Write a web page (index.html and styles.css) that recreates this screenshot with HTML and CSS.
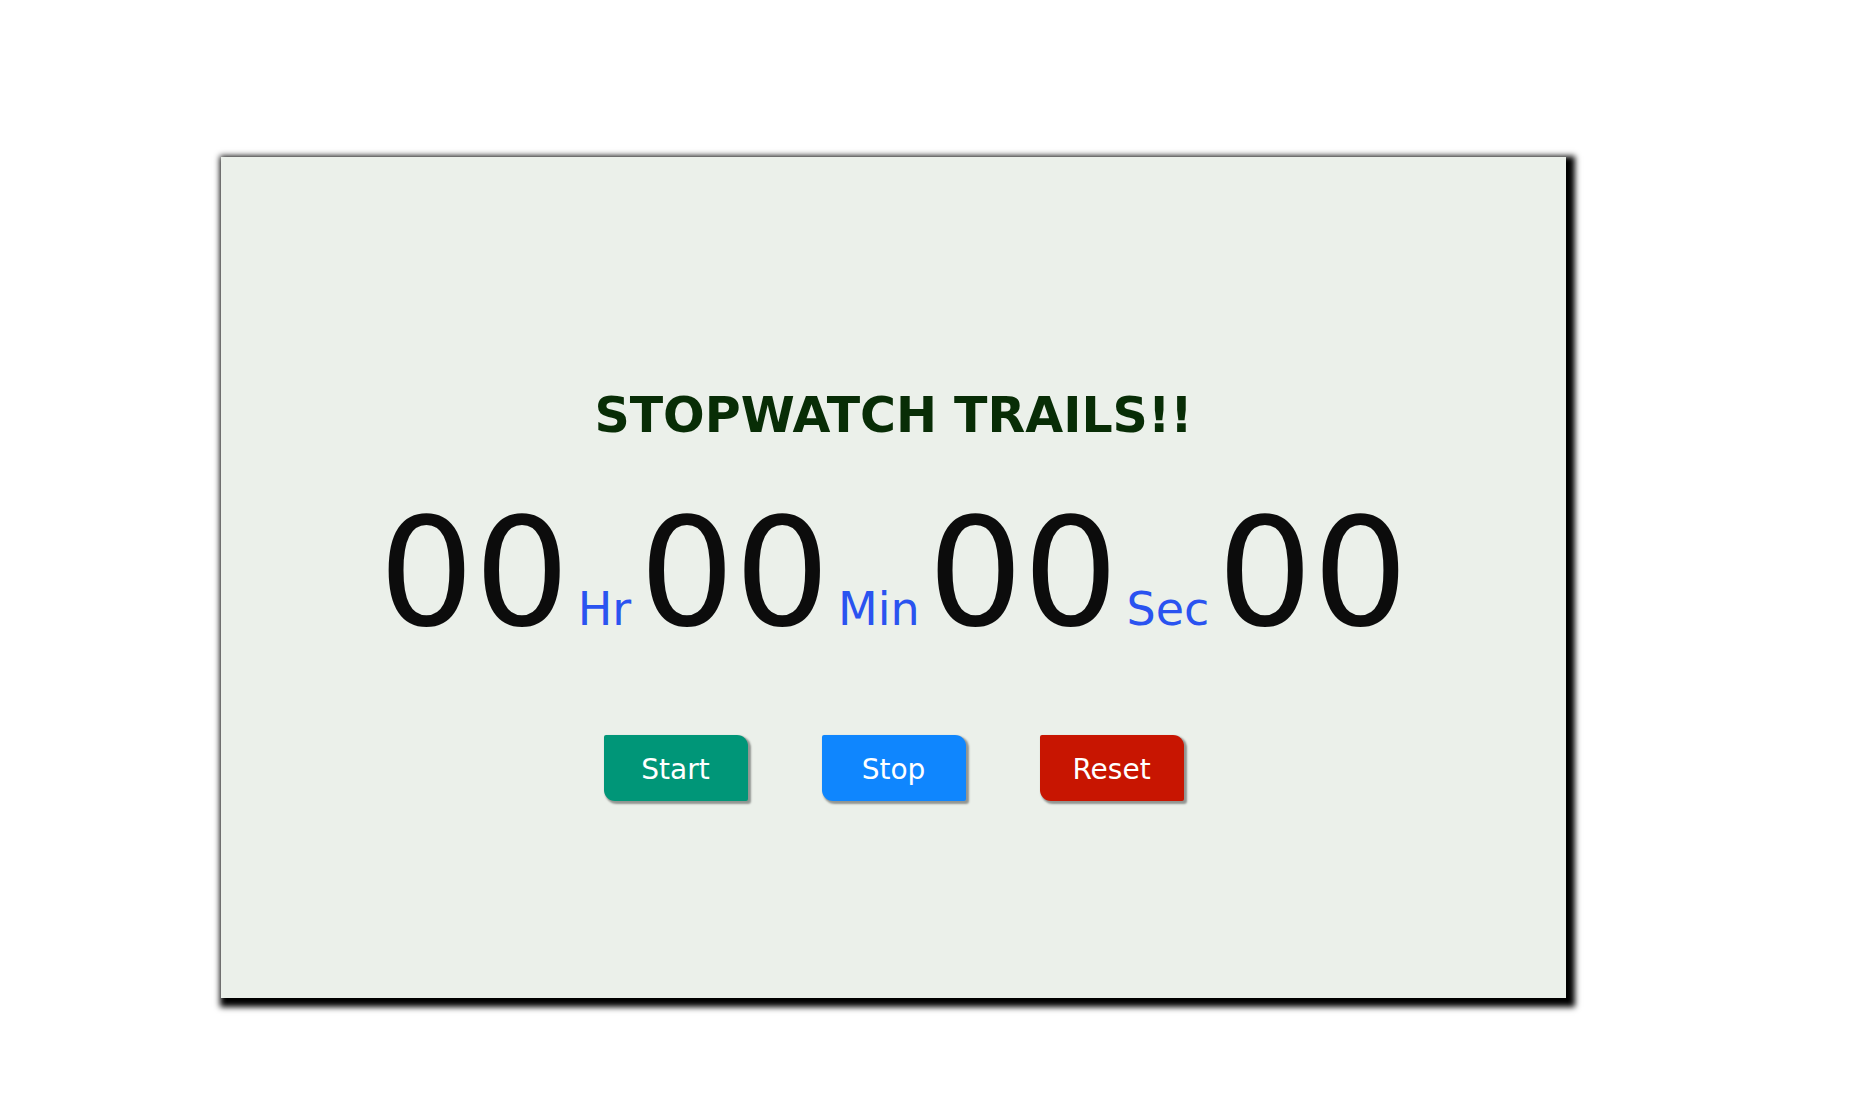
FILE: index.html
```html
<!DOCTYPE html>
<html lang="en">
<head>
<meta charset="utf-8">
<title>Stopwatch</title>
<link rel="stylesheet" href="styles.css">
</head>
<body>
<div class="card">
  <h1 class="title">STOPWATCH TRAILS!!</h1>
  <div class="time">
    <span class="digits">00</span>
    <span class="unit">Hr</span>
    <span class="digits">00</span>
    <span class="unit">Min</span>
    <span class="digits">00</span>
    <span class="unit">Sec</span>
    <span class="digits">00</span>
  </div>
  <div class="buttons">
    <button class="btn btn-start">Start</button>
    <button class="btn btn-stop">Stop</button>
    <button class="btn btn-reset">Reset</button>
  </div>
</div>
</body>
</html>
```
FILE: styles.css
```css
html {
  margin: 0;
  padding: 0;
  background: #ffffff;
}

body {
  box-sizing: border-box;
  margin: 0;
  padding: 157px 0 0 221px;
  min-height: 1101px;
  background: #ffffff;
  font-family: "DejaVu Sans", Verdana, sans-serif;
}

.card {
  box-sizing: border-box;
  width: 1345px;
  height: 841px;
  padding-top: 235px;
  background: #ebf0ea;
  box-shadow: 4px 4px 6px 5px #000;
  display: flex;
  flex-direction: column;
  align-items: center;
}

.title {
  margin: 0 0 58px 0;
  font-size: 49px;
  line-height: 48px;
  font-weight: bold;
  color: #082d06;
}

.time {
  display: flex;
  align-items: baseline;
  justify-content: center;
  gap: 8px;
  height: 150px;
  margin-bottom: 87px;
}

.digits {
  font-size: 150px;
  line-height: 150px;
  color: #0c0c0c;
}

.unit {
  font-size: 46px;
  line-height: 46px;
  color: #2a53f0;
}

.buttons {
  display: flex;
  gap: 74px;
  justify-content: center;
}

.btn {
  width: 144px;
  height: 66px;
  border: none;
  padding: 3px 0 0 0;
  font-family: "DejaVu Sans", Verdana, sans-serif;
  font-size: 28px;
  color: #ffffff;
  border-radius: 2px 11px 2px 11px;
  box-shadow: 2px 2px 2px 1px rgba(0, 0, 0, 0.38);
  cursor: pointer;
}

.btn-start {
  background: #009678;
}

.btn-stop {
  background: #0f86fe;
}

.btn-reset {
  background: #c81501;
}
```
